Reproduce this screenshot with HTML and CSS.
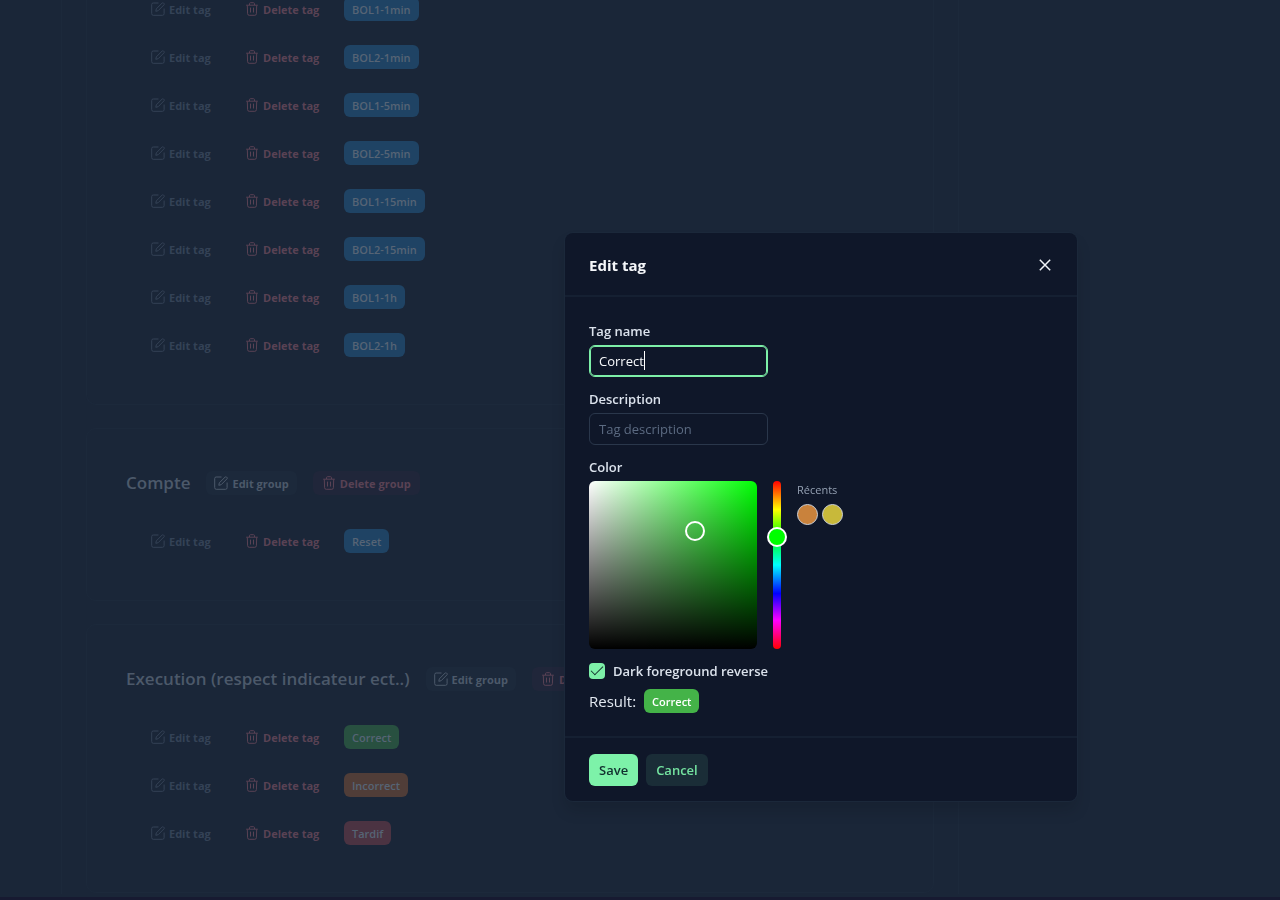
FILE: index.html
```html
<!DOCTYPE html>
<html lang="en">
<head>
<meta charset="utf-8">
<title>Tags</title>
<link rel="stylesheet" href="styles.css">
</head>
<body>
<svg class="sprite" aria-hidden="true">
  <symbol id="edit" viewBox="0 0 14 14"><path d="M7.500 1H2.200Q.7 1 .7 2.500v9Q.7 13.300 2.200 13.300h9.300q1.600 0 1.600-1.600V6.500M4.800 9.300l.5-2.400L11.200 1q.6-.6 1.300 0l.5.500q.600.600 0 1.300L7.200 8.700z"/></symbol>
  <symbol id="trash" viewBox="0 0 14 14"><path d="M1.200 3.200h11.600M4.500 3V1.700q0-1 1-1h3q1 0 1 1V3M2.300 3.400l.3 8.300q.1 1.600 1.600 1.600h5.600q1.500 0 1.600-1.600l.3-8.300M5.500 5.600v4.900M8.500 5.600v4.900"/></symbol>
</svg>
<main class="page">
  <div class="panel">
    <section class="card card-scrolled"><ul class="tags" id="bol"></ul></section>
    <section class="card">
      <header class="group"><h2>Compte</h2>
        <button class="btn soft"><svg><use href="#edit"/></svg>Edit group</button>
        <button class="btn soft danger"><svg><use href="#trash"/></svg>Delete group</button></header>
      <ul class="tags" id="compte"></ul>
    </section>
    <section class="card">
      <header class="group"><h2>Execution (respect indicateur ect..)</h2>
        <button class="btn soft"><svg><use href="#edit"/></svg>Edit group</button>
        <button class="btn soft danger"><svg><use href="#trash"/></svg>Delete group</button></header>
      <ul class="tags" id="execution"></ul>
    </section>
  </div>
</main>
<div class="overlay">
  <form class="modal" role="dialog" aria-labelledby="dialog-title">
    <header class="modal-head">
      <h1 id="dialog-title">Edit tag</h1>
      <button type="button" class="close" aria-label="Close"><svg viewBox="0 0 12 12"><path d="M.8.8l10.400 10.400M11.200.8L.8 11.200"/></svg></button>
    </header>
    <div class="modal-body">
      <div class="field"><label for="name">Tag name</label><div class="editing"><input class="text" id="name" value="Correct" autofocus><span class="caret"></span></div></div>
      <div class="field"><label for="desc">Description</label><input class="text" id="desc" placeholder="Tag description"></div>
      <div class="field">
        <label for="hue">Color</label>
        <div class="picker">
          <div class="shade"><span class="handle"></span></div>
          <div class="hue"><input type="range" id="hue" min="0" max="360" value="120"></div>
          <div class="recent"><span>Récents</span>
            <div class="swatches"><button type="button" class="swatch orange" aria-label="Orange"></button><button type="button" class="swatch yellow" aria-label="Yellow"></button></div>
          </div>
        </div>
      </div>
      <div class="check"><input type="checkbox" id="reverse" checked><label for="reverse">Dark foreground reverse</label></div>
      <div class="result">Result: <span class="badge live">Correct</span></div>
    </div>
    <footer class="modal-foot"><button type="submit" class="action save">Save</button><button type="button" class="action cancel">Cancel</button></footer>
  </form>
</div>
<script src="tags.js"></script>
</body>
</html>
```

FILE: styles.css
```css
* { box-sizing: border-box; }
body { margin: 0; background: #171a31; color: #e2e8f0; font-family: "Open Sans", "Noto Sans", sans-serif; font-size: 13px; }
button, input { font: inherit; }
h1, h2, ul { margin: 0; padding: 0; }
button { border: 0; cursor: pointer; }
.sprite { display: none; }

.page { height: calc(100vh - 3px); overflow: hidden; background: #1a2638; padding-left: 61px; }
.panel { max-width: 898px; height: 100%; padding: 0 24px; border: solid #1c293b; border-width: 0 1px; }
.card { border: 1px solid #1c293b; border-radius: 10px; padding: 42px 24px 47px 39px; margin-bottom: 23px; }
.card-scrolled { border-top: 0; border-radius: 0 0 10px 10px; padding-top: 0; margin-top: -3px; }
.group { display: flex; align-items: center; gap: 16px; height: 24px; margin-bottom: 34px; }
.group h2 { font-size: 17px; line-height: 24px; font-weight: 600; color: #4c596a; }
.tags { list-style: none; display: grid; gap: 24px; padding-left: 17px; }
.tags li { display: grid; grid-template-columns: 78px 91px auto; gap: 16px; justify-items: start; }
.btn { display: inline-flex; align-items: center; gap: 4px; height: 24px; padding: 0 8px; border-radius: 6px; background: none; color: #344256; font-size: 11px; font-weight: 700; white-space: nowrap; }
.btn svg { width: 14px; height: 14px; fill: none; stroke: currentColor; stroke-width: 1; }
.soft { background: #1c293b; color: #4c596a; }
.danger { color: #594254; }
.soft.danger { padding: 0 9px; background: #20263a; }
.badge { display: inline-flex; align-items: center; height: 24px; padding: 0 8px; border-radius: 6px; font-size: 11px; font-weight: 600; color: #566475; background: #1f4364; }
.green { background: #285040; }
.orange-tag { background: #503d38; }
.red { background: #4b3342; }

.overlay { position: fixed; inset: 0; display: grid; place-items: center; padding: 134px 0 0 362px; }
.modal { width: 512px; border-radius: 8px; background: #0f1729; box-shadow: 0 0 0 1px #1b283a, 0 10px 15px rgba(0, 0, 0, .12); }
.modal-head { display: flex; align-items: center; justify-content: space-between; height: 64px; padding: 2px 24px 0; border-bottom: 2px solid #152032; }
.modal-head h1 { font-size: 15px; line-height: 24px; font-weight: 700; color: #f5f7fa; }
.close { display: grid; place-items: center; width: 16px; height: 16px; padding: 0; background: none; }
.close svg { width: 12px; height: 12px; stroke: #f1f5f9; stroke-width: 1.500; fill: none; }
.modal-body { padding: 24px 24px 23px; }
.field { display: flex; flex-direction: column; align-items: flex-start; gap: 4px; margin-bottom: 12px; }
label { line-height: 20px; font-weight: 600; color: #dbe2ec; }
.editing { position: relative; display: flex; }
.caret { position: absolute; left: 55px; top: 6px; width: 1px; height: 19px; background: #fff; }
.text { width: 179px; height: 32px; padding: 0 9px; border: 1px solid #2a374b; border-radius: 6px; outline: 0; background: transparent; color: #f8fafc; caret-color: transparent; }
.text::placeholder { color: #5b6a81; opacity: 1; }
.text:focus { border-color: #7df0a8; box-shadow: inset 0 0 0 1px #7df0a8; }
.picker { display: flex; gap: 16px; }
.shade { position: relative; width: 168px; height: 168px; border-radius: 6px; background: linear-gradient(to top, #000, transparent), linear-gradient(to right, #fff, #00ff04); }
.handle { position: absolute; left: 63%; top: 30%; width: 20px; height: 20px; margin: -10px; border: 2px solid #fff; border-radius: 50%; }
.hue { display: flex; align-items: center; justify-content: center; width: 8px; height: 168px; border-radius: 4px; background: linear-gradient(#f00, #ff0 17%, #0f0 33%, #0ff 50%, #00f 67%, #f0f 83%, #f00); }
.hue input { appearance: none; writing-mode: vertical-lr; flex: none; width: 20px; height: 188px; margin: 0; background: transparent; }
.hue input::-webkit-slider-thumb { appearance: none; width: 20px; height: 20px; border: 2px solid #fff; border-radius: 50%; background: #0f0; }
.recent { display: flex; flex-direction: column; gap: 5px; font-size: 11px; line-height: 18px; color: #94a0b2; }
.swatches { display: flex; gap: 4px; }
.swatch { width: 21px; height: 21px; padding: 0; border: 1px solid #cbd0d8; border-radius: 50%; }
.orange { background: #c9823c; }
.yellow { background: #c8b93a; }
.check { display: flex; align-items: center; gap: 8px; height: 20px; margin-bottom: 8px; }
.check input { appearance: none; display: grid; place-items: center; width: 16px; height: 16px; margin: 0; border-radius: 4px; background: #7df0a8; }
.check input::before { content: ""; width: 11px; height: 5px; border: solid #14322d; border-width: 0 0 1px 1px; transform: translateY(-2px) rotate(-45deg); }
.result { display: flex; align-items: center; gap: 8px; height: 24px; font-size: 15px; }
.live { background: #44b348; color: #fff; }
.modal-foot { display: flex; gap: 8px; padding: 16px 24px 15px; border-top: 2px solid #152032; }
.action { height: 32px; padding: 0 10px; border-radius: 6px; font-weight: 600; }
.save { background: #7df2a9; color: #12302f; }
.cancel { background: #1a2d37; color: #74e3a0; }
```

FILE: tags.js
```js
const groups = {
  bol: [["BOL1-1min"], ["BOL2-1min"], ["BOL1-5min"], ["BOL2-5min"], ["BOL1-15min"], ["BOL2-15min"], ["BOL1-1h"], ["BOL2-1h"]],
  compte: [["Reset"]],
  execution: [["Correct", "green"], ["Incorrect", "orange-tag"], ["Tardif", "red"]]
};
for (const [id, tags] of Object.entries(groups)) {
  document.getElementById(id).innerHTML = tags.map(([name, color = ""]) => `<li>
    <button class="btn"><svg><use href="#edit"/></svg>Edit tag</button>
    <button class="btn danger"><svg><use href="#trash"/></svg>Delete tag</button>
    <span class="badge ${color}">${name}</span></li>`).join("");
}
const field = document.getElementById("name");
field.focus();
field.setSelectionRange(field.value.length, field.value.length);
```
